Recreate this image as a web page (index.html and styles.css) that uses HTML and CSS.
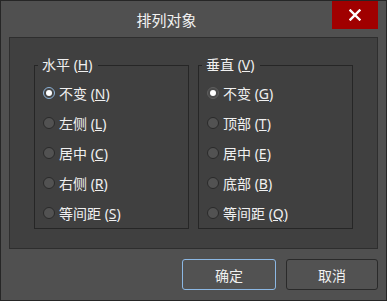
FILE: index.html
```html
<!DOCTYPE html>
<html lang="zh-CN">
<head>
  <meta charset="UTF-8">
  <title>排列对象</title>
  <link rel="stylesheet" href="styles.css">
</head>
<body>
  <div class="dialog">
    <div class="title-bar">
      <div class="title">排列对象</div>
      <button class="close-btn" aria-label="关闭">
        <svg width="12" height="12" viewBox="0 0 12 12"><path d="M1.5 1.5 L10.5 10.5 M10.5 1.5 L1.5 10.5" stroke="#fff" stroke-width="2.4" stroke-linecap="square"/></svg>
      </button>
    </div>

    <div class="panel">
      <fieldset class="group">
        <legend>水平 (<u>H</u>)</legend>
        <label class="option"><span class="radio checked"></span><span>不变 (<u>N</u>)</span></label>
        <label class="option"><span class="radio"></span><span>左侧 (<u>L</u>)</span></label>
        <label class="option"><span class="radio"></span><span>居中 (<u>C</u>)</span></label>
        <label class="option"><span class="radio"></span><span>右侧 (<u>R</u>)</span></label>
        <label class="option"><span class="radio"></span><span>等间距 (<u>S</u>)</span></label>
      </fieldset>
      <fieldset class="group">
        <legend>垂直 (<u>V</u>)</legend>
        <label class="option"><span class="radio checked plain"></span><span>不变 (<u>G</u>)</span></label>
        <label class="option"><span class="radio"></span><span>顶部 (<u>T</u>)</span></label>
        <label class="option"><span class="radio"></span><span>居中 (<u>E</u>)</span></label>
        <label class="option"><span class="radio"></span><span>底部 (<u>B</u>)</span></label>
        <label class="option"><span class="radio"></span><span>等间距 (<u>Q</u>)</span></label>
      </fieldset>
    </div>

    <div class="actions">
      <button class="button primary">确定</button>
      <button class="button">取消</button>
    </div>
  </div>
</body>
</html>
```

FILE: styles.css
```css
body {
  margin: 0;
  padding: 0;
  background-color: #505050;
  font-family: "Noto Sans", "Noto Sans CJK SC", sans-serif;
  color: #f0f0f0;
}
.dialog {
  width: 387px;
  height: 301px;
  box-sizing: border-box;
  border: 1px solid #262626;
  background-color: #505050;
  display: flex;
  flex-direction: column;
}
.title-bar {
  display: flex;
  height: 36px;
  padding-right: 8px;
}
.title {
  flex: 1;
  text-align: center;
  font-size: 15px;
  line-height: 38px;
  color: #f2f2f2;
}
.close-btn {
  width: 46px;
  height: 28px;
  background-color: #a00000;
  border: none;
  padding: 0;
  display: flex;
  align-items: center;
  justify-content: center;
}
.panel {
  margin: 0 8px;
  height: 212px;
  box-sizing: border-box;
  border: 1px solid #2e2e2e;
  background-color: #404040;
  display: flex;
  gap: 9px;
  padding: 18px 24px 0 24px;
}
.group {
  margin: 0;
  width: 155px;
  height: 173px;
  box-sizing: border-box;
  border: 1px solid #262626;
  padding: 4px 0 0 8px;
  display: flex;
  flex-direction: column;
}
.group legend {
  margin-left: -5px;
  padding: 0 6px 0 4px;
  font-size: 14px;
  line-height: 18px;
}
.option {
  display: flex;
  align-items: center;
  height: 30px;
  font-size: 14px;
  gap: 4px;
}
.radio {
  width: 10px;
  height: 10px;
  border-radius: 50%;
  border: 1px solid #2a2a2a;
  background-color: #525252;
  position: relative;
}
.radio.checked {
  border-color: #8db4da;
  background-color: #454545;
}
.radio.checked::after {
  content: "";
  position: absolute;
  left: 2px;
  top: 2px;
  width: 6px;
  height: 6px;
  border-radius: 50%;
  background-color: #fff;
}
.radio.plain {
  border-color: #5e5e5e;
  background-color: #4a4a4a;
}
.actions {
  display: flex;
  justify-content: flex-end;
  gap: 10px;
  padding: 10px 8px 0 0;
}
.button {
  width: 92px;
  height: 31px;
  background-color: #525252;
  border: 1px solid #2a2a2a;
  border-radius: 3px;
  color: #f0f0f0;
  font-family: "Noto Sans", "Noto Sans CJK SC", sans-serif;
  font-size: 14px;
}
.button.primary {
  width: 94px;
  border-color: #8cb8e4;
}
```
